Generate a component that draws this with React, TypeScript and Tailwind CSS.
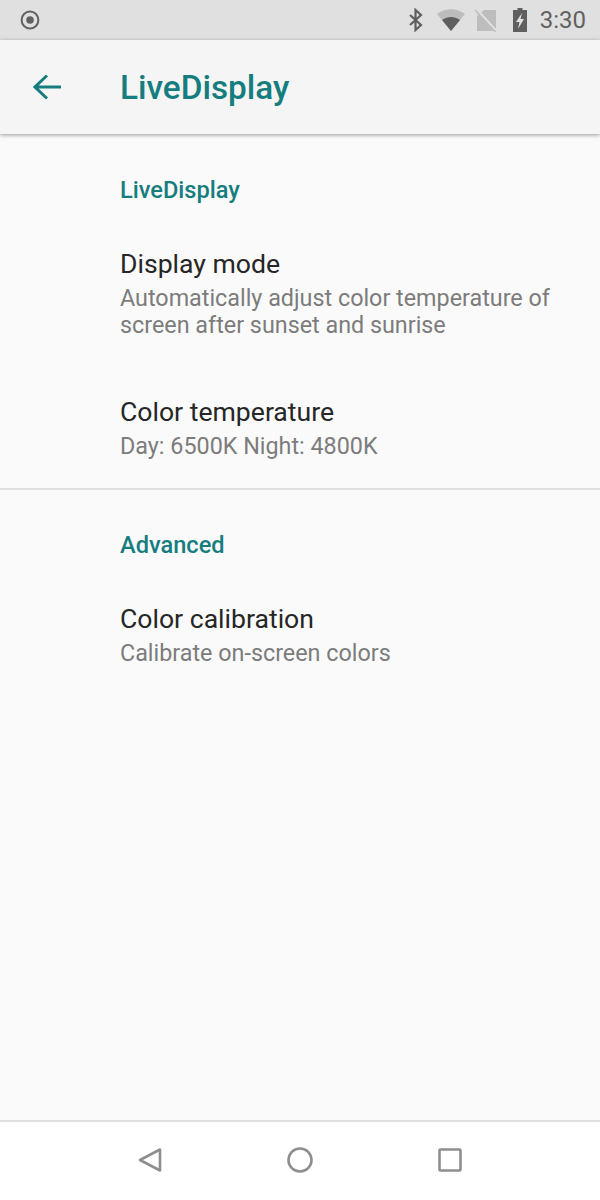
import type { ReactNode } from "react";

const font = { fontFamily: "Roboto, 'Noto Sans', sans-serif" };

function SectionTitle({ children, className }: { children: ReactNode; className: string }) {
  return (
    <p className={`pl-[120px] text-[23.6px] leading-[28px] font-medium text-[#167d7f] ${className}`}>
      {children}
    </p>
  );
}

function Row({ title, summary, className }: { title: string; summary: ReactNode; className: string }) {
  return (
    <div className={`pl-[120px] ${className}`}>
      <p className="text-[26.6px] leading-[34px] text-[#262626]">{title}</p>
      <p className="mt-[4px] text-[23.33px] leading-[27px] text-[#7c7c7c]">{summary}</p>
    </div>
  );
}

function StatusBar() {
  return (
    <div className="flex h-10 items-center bg-[#e0e0e0] pr-[14px] pl-5">
      <svg width="20" height="20" viewBox="0 0 20 20">
        <circle cx="10" cy="10" r="8.4" fill="none" stroke="#616161" strokeWidth="2" />
        <circle cx="10" cy="10" r="3.8" fill="#616161" />
      </svg>
      <div className="ml-auto flex items-center">
        <svg width="16" height="24" viewBox="0 0 16 24" className="mr-[12px]">
          <path d="M2 7l11 10-5.5 5V2L13 7 2 17" fill="none" stroke="#5f5f5f" strokeWidth="2.2" />
        </svg>
        <svg width="30" height="24" viewBox="0 0 30 24" className="mr-[8px]">
          <path d="M1 6C9-0.500 21-0.500 29 6L15 23z" fill="#bdbdbd" />
          <path d="M6 12c5.500-4 12.500-4 18 0L15 23z" fill="#5f5f5f" />
        </svg>
        <svg width="22" height="24" viewBox="0 0 22 24" className="mr-[17px]">
          <path d="M10 2h12v21H3V8z" fill="#bdbdbd" />
          <path d="M2 1L22 23" stroke="#e0e0e0" strokeWidth="3" />
          <path d="M1 2L21.500 24" stroke="#bdbdbd" strokeWidth="1.500" />
        </svg>
        <svg width="14" height="24" viewBox="0 0 14 24" className="mr-[13px]">
          <path d="M4.500 0h5v2H14v22H0V2h4.500z" fill="#5f5f5f" />
          <path d="M9 5L3 14h3.500l-1.500 7 6-10H7.500z" fill="#e0e0e0" />
        </svg>
        <span className="text-[24px] leading-none text-[#616161]">3:30</span>
      </div>
    </div>
  );
}

function NavBar() {
  return (
    <div className="flex h-[80px] items-center justify-center gap-[125px] border-t-2 border-[#e0e0e0] bg-white pb-[2px]">
      <svg width="24" height="26" viewBox="0 0 24 26">
        <path d="M22 2.500v21L2 13z" fill="none" stroke="#8e8e8e" strokeWidth="2.600" strokeLinejoin="round" />
      </svg>
      <svg width="26" height="26" viewBox="0 0 26 26">
        <circle cx="13" cy="13" r="11.500" fill="none" stroke="#8e8e8e" strokeWidth="2.600" />
      </svg>
      <svg width="24" height="24" viewBox="0 0 24 24">
        <rect x="1.500" y="1.500" width="21" height="21" rx="1" fill="none" stroke="#8e8e8e" strokeWidth="2.600" />
      </svg>
    </div>
  );
}

export default function App() {
  return (
    <div className="flex h-[1200px] w-[600px] flex-col overflow-hidden bg-[#fafafa]" style={font}>
      <StatusBar />
      <header className="relative z-10 flex h-[94px] items-center bg-[#f5f5f5] pl-[33px] shadow-[0_1px_4px_rgba(0,0,0,0.4)]">
        <svg width="28" height="26" viewBox="0 0 28 26">
          <path d="M28 13H2M14 1.500L2 13l12 11.500" fill="none" stroke="#167d7f" strokeWidth="3" />
        </svg>
        <h1 className="mt-[2px] ml-[59px] text-[33.33px] font-medium text-[#167d7f]">LiveDisplay</h1>
      </header>
      <main className="flex-1">
        <SectionTitle className="mt-[42px]">LiveDisplay</SectionTitle>
        <Row
          className="mt-[43px]"
          title="Display mode"
          summary={
            <>
              Automatically adjust color temperature of
              <br />
              screen after sunset and sunrise
            </>
          }
        />
        <Row className="mt-[56px]" title="Color temperature" summary="Day: 6500K Night: 4800K" />
        <div className="mt-[28px] h-[2px] bg-[#e0e0e0]" />
        <SectionTitle className="mt-[41px]">Advanced</SectionTitle>
        <Row className="mt-[43px]" title="Color calibration" summary="Calibrate on-screen colors" />
      </main>
      <NavBar />
    </div>
  );
}
